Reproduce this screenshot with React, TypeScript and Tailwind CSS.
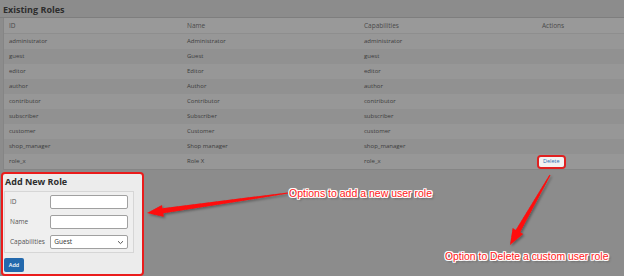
import React from "react";

const rows: [string, string, string][] = [
  ["administrator", "Administrator", "administrator"],
  ["guest", "Guest", "guest"],
  ["editor", "Editor", "editor"],
  ["author", "Author", "author"],
  ["contributor", "Contributor", "contributor"],
  ["subscriber", "Subscriber", "subscriber"],
  ["customer", "Customer", "customer"],
  ["shop_manager", "Shop manager", "shop_manager"],
  ["role_x", "Role X", "role_x"],
];

const outline =
  "[text-shadow:1px_0_0_#fff,-1px_0_0_#fff,0_1px_0_#fff,0_-1px_0_#fff,1px_1px_0_#fff,-1px_-1px_0_#fff,1px_-1px_0_#fff,-1px_1px_0_#fff,2px_2px_2px_rgba(0,0,0,0.35)]";

export default function App() {
  return (
    <div className="relative w-[624px] h-[276px] overflow-hidden bg-[#8c8c8c] font-['Open_Sans',sans-serif] text-[#333]">
      <div className="h-[18px] flex items-center px-[3px] border-b border-[#7e7e7e]">
        <span className="text-[9px] font-bold text-[#2e2e2e] leading-none mt-[1px]">Existing Roles</span>
      </div>
      <div className="ml-[3px] border-l border-b border-[#858585]">
        <div className="grid grid-cols-[178px_177px_178px_1fr] h-[16px] items-center bg-[#999999] text-[6.5px] text-[#4a4a4a] border-b border-[#8e8e8e]">
          <div className="px-[5px]">ID</div>
          <div className="px-[5px]">Name</div>
          <div className="px-[5px]">Capabilities</div>
          <div className="px-[5px]">Actions</div>
        </div>
        {rows.map((r, i) => (
          <div
            key={r[0]}
            className={`grid grid-cols-[178px_177px_178px_1fr] h-[15px] items-center text-[6px] text-[#3c3c3c] ${
              i % 2 === 0 ? "bg-[#979797]" : "bg-[#919191]"
            }`}
          >
            <div className="px-[5px]">{r[0]}</div>
            <div className="px-[5px]">{r[1]}</div>
            <div className="px-[5px]">{r[2]}</div>
            <div className="px-0">
              {r[0] === "role_x" && (
                <div className="inline-flex rounded-[4px] border-2 border-[#e02020]">
                  <div className="bg-[#f2f2f2] rounded-[2px] px-[4px] h-[10px] flex items-center text-[5.5px] text-[#2d6db3]">
                    Delete
                  </div>
                </div>
              )}
            </div>
          </div>
        ))}
      </div>

      <div className="mt-[2px] ml-[1px] w-[143px] h-[104px] rounded-[4px] border-2 border-[#ea1c1c] bg-[#ececec] px-[1px]">
        <div className="text-[9px] font-bold text-[#2e2e2e] leading-none mt-[3px] ml-[1px]">Add New Role</div>
        <div className="mt-[5px] w-[130px] border border-[#d6d6d6] bg-[#efefef] px-[5px] pt-[3px] pb-[3px] flex flex-col gap-[6px]">
          <div className="flex items-center h-[14px]">
            <span className="w-[41px] text-[6.5px] text-[#555]">ID</span>
            <div className="w-[79px] h-[14px] bg-white border border-[#a0a0a0] rounded-[2px]" />
          </div>
          <div className="flex items-center h-[14px]">
            <span className="w-[41px] text-[6.5px] text-[#555]">Name</span>
            <div className="w-[79px] h-[14px] bg-white border border-[#a0a0a0] rounded-[2px]" />
          </div>
          <div className="flex items-center h-[14px]">
            <span className="w-[41px] text-[6.5px] text-[#555]">Capabilities</span>
            <div className="w-[79px] h-[14px] bg-white border border-[#a0a0a0] rounded-[2px] flex items-center justify-between px-[3px]">
              <span className="text-[6.5px] text-[#333]">Guest</span>
              <svg width="7" height="5" viewBox="0 0 7 5">
                <path d="M1 1.2 L3.5 3.6 L6 1.2" fill="none" stroke="#555" strokeWidth="1" />
              </svg>
            </div>
          </div>
        </div>
        <div className="mt-[5px] w-[20px] h-[14px] bg-[#2369ad] rounded-[2px] flex items-center justify-center text-[5.5px] font-semibold text-white">
          Add
        </div>
      </div>

      <svg className="absolute left-0 top-0" width="624" height="276" viewBox="0 0 624 276">
        <defs>
          <filter id="sh" x="-10%" y="-10%" width="130%" height="130%">
            <feDropShadow dx="1.5" dy="1.5" stdDeviation="1" floodColor="#000" floodOpacity="0.35" />
          </filter>
        </defs>
        <polygon
          filter="url(#sh)"
          fill="#ff0a0a"
          points="147,213 163.7,216.7 163.2,213.3 288.1,193.6 287.9,192.4 162.4,208.3 162,204.9"
        />
        <polygon
          filter="url(#sh)"
          fill="#ff0a0a"
          points="510,245 523.1,234.1 520.1,232.3 550.5,175.3 549.5,174.7 515.7,229.9 512.7,228.1"
        />
      </svg>

      <div
        className={`absolute left-[289px] top-[188px] text-[10.5px] leading-none text-[#ff2020] whitespace-nowrap font-['Liberation_Sans',sans-serif] ${outline}`}
      >
        Options to add a new user role
      </div>
      <div
        className={`absolute left-[445px] top-[252px] text-[10.4px] leading-none text-[#ff2020] whitespace-nowrap font-['Liberation_Sans',sans-serif] ${outline}`}
      >
        Option to Delete a custom user role
      </div>
    </div>
  );
}
